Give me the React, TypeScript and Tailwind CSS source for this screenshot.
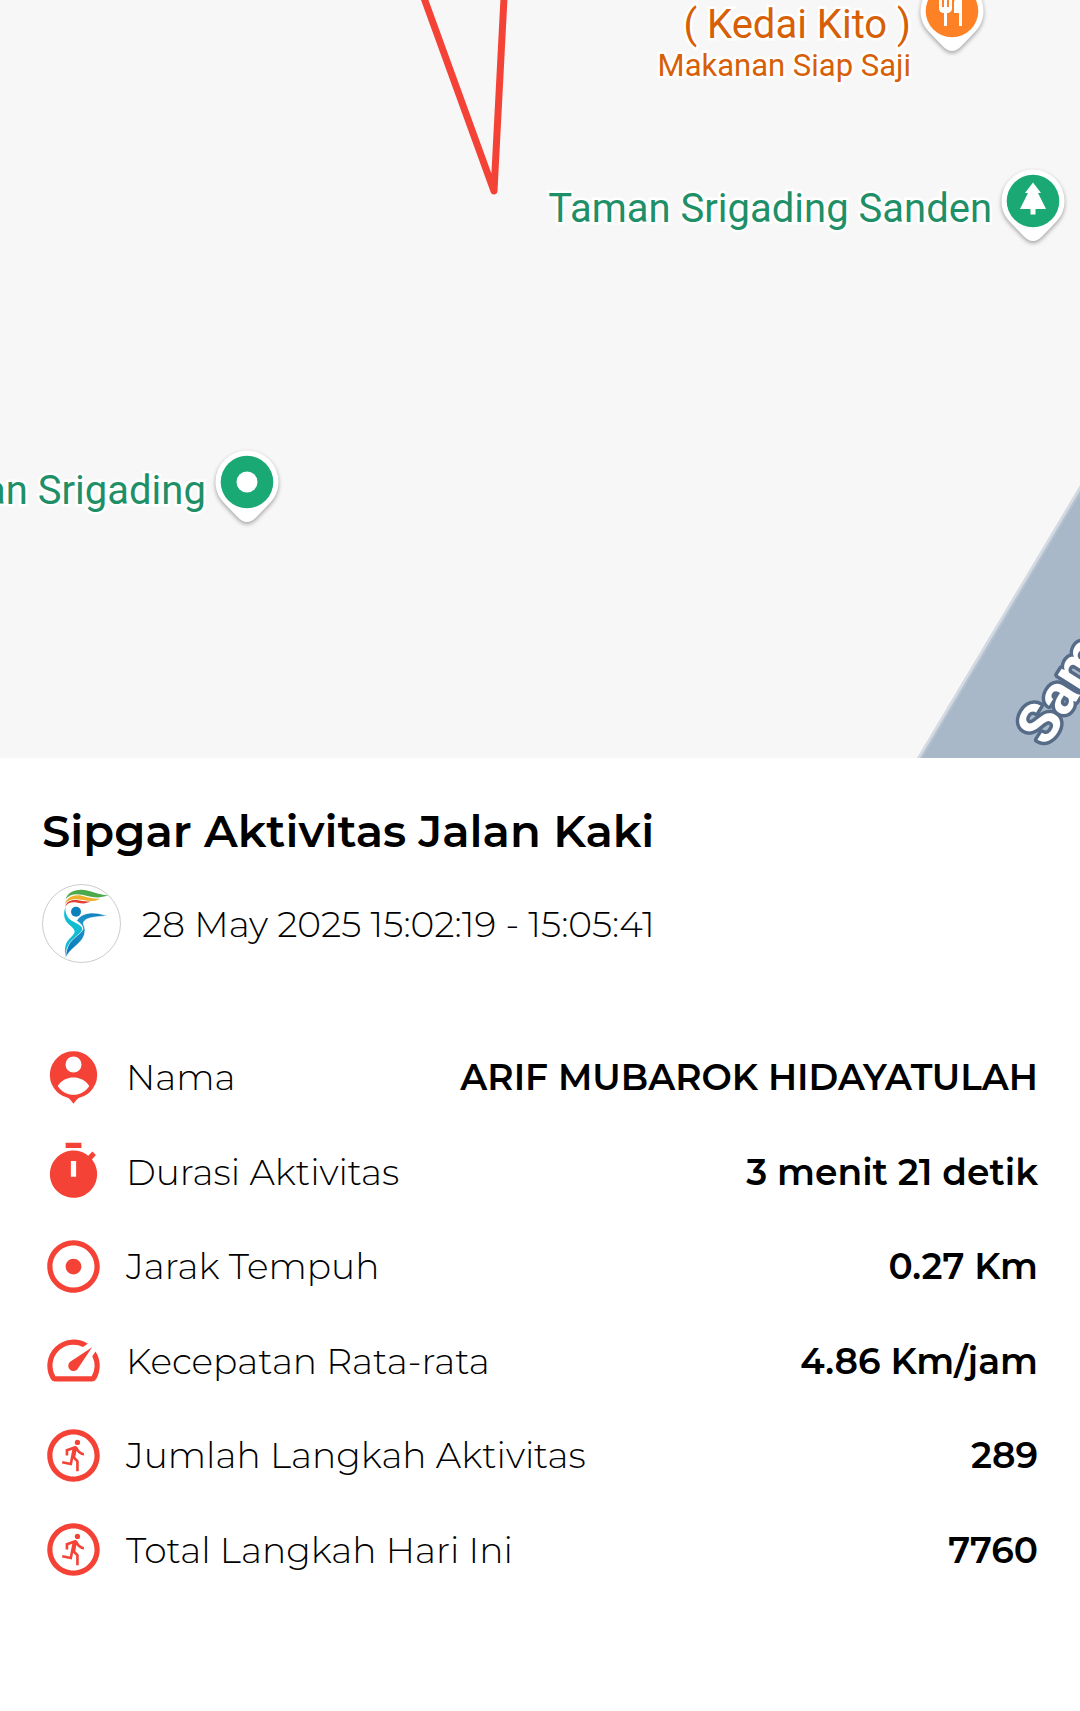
import type { ReactNode } from "react";
import { MdAdjust, MdOutlineRunCircle, MdSpeed } from "react-icons/md";

function PersonPinIcon() {
  return (
    <svg viewBox="0 0 24 24" className="size-full" fill="currentColor" aria-hidden="true">
      <path
        fillRule="evenodd"
        d="M12 2a9 9 0 0 0-2.2 17.73c.5.2.9.67 2.2 2.27 1.3-1.6 1.7-2.07 2.2-2.27A9 9 0 0 0 12 2zm0 2a3 3 0 1 1 0 6.1 3 3 0 0 1 0-6.1zM6 15.2C7.3 13 9.8 12 12 12s4.700 1 6 3.200c-1.300 2.100-3.600 3.400-6 3.400s-4.700-1.300-6-3.400z"
      />
    </svg>
  );
}

function StopwatchIcon() {
  return (
    <svg viewBox="0 0 24 24" className="size-full" fill="currentColor" aria-hidden="true">
      <path
        fillRule="evenodd"
        d="M9 1h6v2H9zM17.620 5.980l1.600-1.600 1.300 1.300-1.490 1.710A9 9 0 1 1 17.620 5.980zM11 8v6h2V8z"
      />
    </svg>
  );
}

function MapPin({ color, children }: { color: string; children: ReactNode }) {
  return (
    <svg
      viewBox="0 0 72 84"
      className="h-[84px] w-[72px] drop-shadow-[0_2px_2px_rgba(0,0,0,0.35)]"
      aria-hidden="true"
    >
      <path
        fill="#fff"
        d="M36 4.500A31.500 31.500 0 0 0 4.500 36c0 10 4.500 17 9.500 22l12.500 13c3.500 3.500 6 5 9.500 5s6-1.500 9.500-5L58 58c5-5 9.500-12 9.500-22A31.500 31.500 0 0 0 36 4.500z"
      />
      <circle cx="36" cy="36" r="26.300" fill={color} />
      {children}
    </svg>
  );
}

function Logo() {
  return (
    <svg viewBox="36 27 237 237" className="size-[79px] shrink-0" role="img" aria-label="Sipgar">
      <defs>
        <linearGradient id="arm" x1="0" y1="1" x2="1" y2="0">
          <stop offset="0" stopColor="#0a76b5" />
          <stop offset="0.600" stopColor="#1b93c9" />
          <stop offset="1" stopColor="#0a76b5" />
        </linearGradient>
      </defs>
      <circle cx="154.500" cy="145.500" r="117" fill="#fff" stroke="#b0b0b0" strokeWidth="2" />
      <path fill="#4caa4b" d="M107 72c5-18 25-29 48-28 26 1 48 15 79 17-22 9-42 7-62 2-24-6-48-10-65 9z" />
      <path fill="#efb02e" d="M106 82c8-16 28-24 49-20 18 4 34 10 56 9-15 9-34 8-52 4-20-4-42-5-53 11z" />
      <path fill="#e23d31" d="M106 95c1-14 17-22 34-20 15 2 27 6 42 4-13 8-26 7-39 4-16-3-29-2-37 12z" />
      <circle cx="138" cy="110" r="15" fill="#0c80bd" />
      <path
        fill="#10bdd3"
        d="M106 95C106 118 112 128 125 137C140 146 157 152 157 162C155 178 130 188 118 208C108 222 107 238 107 248C104 236 104 222 107 210C112 192 132 182 134 170C134 160 118 152 108 138C99 122 103 108 106 95z"
      />
      <path
        fill="url(#arm)"
        stroke="#fff"
        strokeWidth="2"
        d="M140 137C150 120 168 114 188 114C205 114 218 119 233 122C212 124 196 125 180 129C166 133 160 139 160 146C160 150 165 155 165 166C165 205 120 215 107 250C108 225 113 210 126 196C140 181 158 172 159 160C158 150 148 143 140 137z"
      />
    </svg>
  );
}

const stats: { label: string; value: string; icon: ReactNode }[] = [
  { label: "Nama", value: "ARIF MUBAROK HIDAYATULAH", icon: <PersonPinIcon /> },
  { label: "Durasi Aktivitas", value: "3 menit 21 detik", icon: <StopwatchIcon /> },
  { label: "Jarak Tempuh", value: "0.27 Km", icon: <MdAdjust className="size-full" /> },
  { label: "Kecepatan Rata-rata", value: "4.86 Km/jam", icon: <MdSpeed className="size-full" /> },
  { label: "Jumlah Langkah Aktivitas", value: "289", icon: <MdOutlineRunCircle className="size-full" /> },
  { label: "Total Langkah Hari Ini", value: "7760", icon: <MdOutlineRunCircle className="size-full" /> },
];

function ActivityMap() {
  return (
    <section
      aria-label="Peta"
      className="relative h-[758px] overflow-hidden bg-[#f7f7f7] font-['Roboto',sans-serif] whitespace-nowrap"
    >
      <svg className="absolute top-0 left-0 h-[758px] w-[1080px]" viewBox="0 0 1080 758" aria-hidden="true">
        <path d="M918 760L1083 484V760z" fill="#a9b8c9" stroke="#d3dae2" strokeWidth="4" />
        <path d="M920 760L1085 484V760z" fill="#a9b8c9" stroke="#b4c1cf" strokeWidth="2" />
        <path d="M424 -2L494 191L504 -2" fill="none" stroke="#f44336" strokeWidth="7" strokeLinejoin="round" />
        <text
          transform="translate(1047 748) rotate(-58)"
          fontSize="56"
          fontWeight="700"
          fill="#fff"
          stroke="#566b87"
          strokeWidth="7"
          strokeLinejoin="round"
          paintOrder="stroke"
        >
          Sam
        </text>
      </svg>

      <div className="absolute top-[2px] left-[659px] flex w-[252px] flex-col items-end text-[#d75f07] [-webkit-text-stroke:5px_#fff] [paint-order:stroke_fill]">
        <span className="text-[40px] leading-[46px]">( Kedai Kito )</span>
        <span className="text-[31px] leading-[36px]">Makanan Siap Saji</span>
      </div>
      <div className="absolute top-[-25px] left-[916px]">
        <MapPin color="#ff8126">
          <path
            fill="#fff"
            d="M23 18h3v14h2V18h3v14h2V18h3v15c0 3-2 5-5 5v13h-3V38c-3 0-5-2-5-5zM46 20v31h-3V38h-5V28c0-5 4-8 8-8z"
          />
        </MapPin>
      </div>

      <span className="absolute top-[186px] right-[88px] text-[40px] leading-[46px] text-[#1f8f68] [-webkit-text-stroke:5px_#fff] [paint-order:stroke_fill]">
        Taman Srigading Sanden
      </span>
      <div className="absolute top-[165px] left-[997px]">
        <MapPin color="#1aa974">
          <path
            fill="#fff"
            d="M36 17.500l8 10.500h-3l8 16H38.500v5.500h-5V44H23l8-16h-3z"
          />
        </MapPin>
      </div>

      <span className="absolute top-[468px] left-[-16px] text-[40px] leading-[46px] text-[#1f8f68] [-webkit-text-stroke:5px_#fff] [paint-order:stroke_fill]">
        an Srigading
      </span>
      <div className="absolute top-[446px] left-[211px]">
        <MapPin color="#1aa974">
          <circle cx="36" cy="36" r="10.500" fill="#fff" />
        </MapPin>
      </div>
    </section>
  );
}

export default function App() {
  return (
    <main className="min-h-screen bg-white font-['Montserrat','Inter',sans-serif] text-black">
      <ActivityMap />
      <section className="px-[42px] pt-[46px] pb-16">
        <h1 className="text-[45px] leading-[54px] font-semibold">Sipgar Aktivitas Jalan Kaki</h1>
        <div className="mt-[26px] flex items-center gap-[21px]">
          <Logo />
          <p className="text-[36px] leading-[44px] font-light">28 May 2025 15:02:19 - 15:05:41</p>
        </div>
        <dl className="mt-[67px] grid min-h-[567px] auto-rows-fr">
          {stats.map((stat) => (
            <div key={stat.label} className="flex items-center text-[36px] leading-[44px]">
              <dt className="flex items-center gap-[21px] font-light">
                <span className="size-[63px] shrink-0 text-[#f44336]">{stat.icon}</span>
                {stat.label}
              </dt>
              <dd className="ml-auto text-right font-semibold">{stat.value}</dd>
            </div>
          ))}
        </dl>
      </section>
    </main>
  );
}
